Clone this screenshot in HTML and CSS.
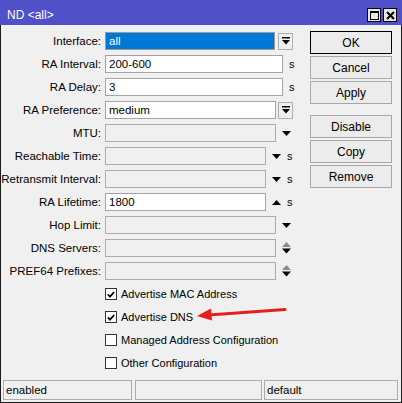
FILE: index.html
```html
<!DOCTYPE html>
<html>
<head>
<meta charset="utf-8">
<link rel="stylesheet" href="styles.css">
</head>
<body>
<div class="window">
  <div class="titlebar">
    <span class="title">ND &lt;all&gt;</span>
    <div class="tb-btns">
      <span class="tb-btn"><svg width="9" height="9" viewBox="0 0 9 9"><rect x="0.5" y="0.5" width="8" height="8" fill="none" stroke="#000"/><rect x="0" y="0" width="9" height="2" fill="#000"/></svg></span>
      <span class="tb-btn"><svg width="9" height="9" viewBox="0 0 9 9"><path d="M1 1 L8 8 M8 1 L1 8" stroke="#000" stroke-width="2"/></svg></span>
    </div>
  </div>
  <div class="body">
    <div class="form">
      <div class="row"><span class="label">Interface:</span><span class="field sel w170">all</span><span class="ddbtn"><svg width="8" height="8" viewBox="0 0 8 8"><rect x="0" y="0" width="8" height="1.5" fill="#000"/><polygon points="0,3 8,3 4,7.5" fill="#000"/></svg></span></div>
      <div class="row"><span class="label">RA Interval:</span><span class="field w178">200-600</span><span class="unit u6">s</span></div>
      <div class="row"><span class="label">RA Delay:</span><span class="field w178">3</span><span class="unit u6">s</span></div>
      <div class="row"><span class="label">RA Preference:</span><span class="field w171">medium</span><span class="ddbtn g2"><svg width="8" height="8" viewBox="0 0 8 8"><rect x="0" y="0" width="8" height="1.5" fill="#000"/><polygon points="0,3 8,3 4,7.5" fill="#000"/></svg></span></div>
      <div class="row"><span class="label">MTU:</span><span class="field off w171"></span><span class="arr a6"><svg width="9" height="5" viewBox="0 0 9 5"><polygon points="0,0 9,0 4.5,5" fill="#000"/></svg></span></div>
      <div class="row"><span class="label">Reachable Time:</span><span class="field off w161"></span><span class="arr a6"><svg width="9" height="5" viewBox="0 0 9 5"><polygon points="0,0 9,0 4.5,5" fill="#000"/></svg></span><span class="unit u5">s</span></div>
      <div class="row"><span class="label">Retransmit Interval:</span><span class="field off w161"></span><span class="arr a6"><svg width="9" height="5" viewBox="0 0 9 5"><polygon points="0,0 9,0 4.5,5" fill="#000"/></svg></span><span class="unit u5">s</span></div>
      <div class="row"><span class="label">RA Lifetime:</span><span class="field w161">1800</span><span class="arr a6"><svg width="9" height="5" viewBox="0 0 9 5"><polygon points="0,5 9,5 4.5,0" fill="#000"/></svg></span><span class="unit u5">s</span></div>
      <div class="row"><span class="label">Hop Limit:</span><span class="field off w171"></span><span class="arr a6"><svg width="9" height="5" viewBox="0 0 9 5"><polygon points="0,0 9,0 4.5,5" fill="#000"/></svg></span></div>
      <div class="row"><span class="label">DNS Servers:</span><span class="field off w171"></span><span class="arr a6"><svg width="9" height="12" viewBox="0 0 9 12"><polygon points="0,5 9,5 4.5,0" fill="#8c8c8c"/><polygon points="0,6.5 9,6.5 4.5,11.5" fill="#000"/></svg></span></div>
      <div class="row"><span class="label">PREF64 Prefixes:</span><span class="field off w171"></span><span class="arr a6"><svg width="9" height="12" viewBox="0 0 9 12"><polygon points="0,5 9,5 4.5,0" fill="#8c8c8c"/><polygon points="0,6.5 9,6.5 4.5,11.5" fill="#000"/></svg></span></div>
      <div class="row"><span class="label"></span><span class="cb"><svg width="8" height="7" viewBox="0 0 8 7"><path d="M0.8 3.4 L3 5.6 L7.2 1" fill="none" stroke="#000" stroke-width="1.8"/></svg></span><span class="cblabel">Advertise MAC Address</span></div>
      <div class="row"><span class="label"></span><span class="cb"><svg width="8" height="7" viewBox="0 0 8 7"><path d="M0.8 3.4 L3 5.6 L7.2 1" fill="none" stroke="#000" stroke-width="1.8"/></svg></span><span class="cblabel">Advertise DNS</span></div>
      <div class="row"><span class="label"></span><span class="cb"></span><span class="cblabel">Managed Address Configuration</span></div>
      <div class="row"><span class="label"></span><span class="cb"></span><span class="cblabel">Other Configuration</span></div>
    </div>
    <div class="buttons">
      <span class="btn default">OK</span>
      <span class="btn">Cancel</span>
      <span class="btn">Apply</span>
      <span class="btn sep">Disable</span>
      <span class="btn">Copy</span>
      <span class="btn">Remove</span>
    </div>
  </div>
  <div class="status">
    <span class="sfield s1">enabled</span>
    <span class="sfield s2"></span>
    <span class="sfield s3">default</span>
  </div>
  <svg class="redarrow" width="92" height="14" viewBox="0 0 92 14"><path d="M12 8 L88 2.5" stroke="#e3201b" stroke-width="3" stroke-linecap="round"/><polygon points="0,9 14,1.5 15,13.5" fill="#e3201b"/></svg>
</div>
</body>
</html>
```

FILE: styles.css
```css
* { box-sizing: border-box; }
html, body { margin: 0; padding: 0; background: #ffffff; }
body {
  font-family: "Liberation Sans", Arial, sans-serif;
  font-size: 11px;
  color: #000;
}
.window {
  position: relative;
  width: 402px;
  height: 403px;
  border: 1px solid #1c1c1c;
  border-top: 0;
  background: #f0f0f0;
  display: flex;
  flex-direction: column;
}
.titlebar {
  height: 25px;
  padding: 5px 5px 0 6px;
  background: #5050c9;
  display: flex;
  align-items: center;
  justify-content: space-between;
  margin: 0 -1px;
}
.title { color: #fff; font-size: 12px; padding-left: 1px; }
.tb-btns { display: flex; gap: 2px; }
.tb-btn {
  width: 14px;
  height: 14px;
  background: #e6e6e6;
  border: 1px solid #000;
  display: flex;
  align-items: center;
  justify-content: center;
}
.tb-btn svg { display: block; }
.body {
  flex: 1;
  display: flex;
  padding-top: 6px;
}
.form {
  width: 309px;
  display: flex;
  flex-direction: column;
  padding-top: 1px;
}
.row {
  display: flex;
  align-items: center;
  height: 18px;
  margin-bottom: 5px;
}
.label {
  width: 104px;
  padding-right: 4px;
  text-align: right;
  white-space: nowrap;
  font-size: 11.5px;
}
.field {
  height: 18px;
  border: 1px solid #a4a4a4;
  background: #fff;
  padding-left: 3px;
  line-height: 16px;
  white-space: nowrap;
  font-size: 11.5px;
}
.field.off { background: #f0f0f0; border-color: #acacac; }
.field.sel { background: #0078d7; color: #fff; border-color: #9a9a9a; }
.w170 { width: 170px; }
.w171 { width: 171px; }
.w178 { width: 178px; }
.w161 { width: 161px; }
.ddbtn {
  width: 15px;
  height: 17px;
  margin-left: 3px;
  border: 1px solid #adadad;
  background: #f0f0f0;
  display: flex;
  align-items: center;
  justify-content: center;
}
.ddbtn.g2 { margin-left: 2px; }
.ddbtn svg { display: block; }
.unit { line-height: 18px; }
.u6 { margin-left: 6px; }
.u5 { margin-left: 6px; }
.arr { display: flex; align-items: center; }
.arr svg { display: block; }
.a6 { margin-left: 6px; }
.cb {
  width: 12px;
  height: 12px;
  border: 1px solid #333;
  background: #fff;
  display: flex;
  align-items: center;
  justify-content: center;
}
.cb svg { display: block; }
.cblabel { margin-left: 4px; white-space: nowrap; }
.buttons {
  display: flex;
  flex-direction: column;
  padding-left: 0;
}
.btn {
  width: 82px;
  height: 23px;
  margin-bottom: 2px;
  border: 1px solid #a7a7a7;
  background: #ececec;
  display: flex;
  align-items: center;
  justify-content: center;
  font-size: 12px;
}
.btn.default { border-color: #000; }
.btn.sep { margin-top: 9px; }
.status {
  display: flex;
  padding: 0 2px 2px 2px;
  height: 22px;
}
.sfield {
  height: 20px;
  border: 1px solid #acacac;
  padding-left: 2px;
  line-height: 18px;
  font-size: 11.5px;
}
.s1 { width: 129px; }
.s2 { width: 127px; margin-left: 3px; }
.s3 { width: 134px; margin-left: 2px; }
.redarrow {
  position: absolute;
  left: 196px;
  top: 307px;
}
```
